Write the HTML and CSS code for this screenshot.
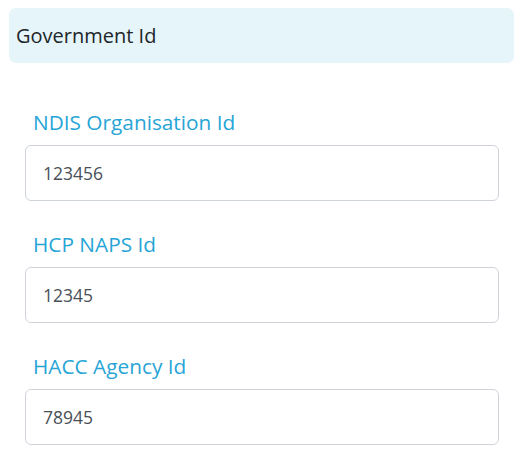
FILE: index.html
```html
<!DOCTYPE html>
<html>
<head>
<meta charset="utf-8">
<link rel="stylesheet" href="styles.css">
</head>
<body>
<div class="panel">
  <div class="panel-header">Government Id</div>
  <div class="panel-body">
    <div class="field">
      <label class="field-label">NDIS Organisation Id</label>
      <div class="field-input">123456</div>
    </div>
    <div class="field">
      <label class="field-label">HCP NAPS Id</label>
      <div class="field-input">12345</div>
    </div>
    <div class="field">
      <label class="field-label">HACC Agency Id</label>
      <div class="field-input">78945</div>
    </div>
  </div>
</div>
</body>
</html>
```
FILE: styles.css
```css
html, body {
  margin: 0;
  padding: 0;
  background: #ffffff;
}
body {
  font-family: "Open Sans", "Noto Sans", sans-serif;
}
.panel {
  padding: 8px 11px 0 9px;
}
.panel-header {
  background: #e5f5fa;
  border-radius: 7px;
  height: 55px;
  box-sizing: border-box;
  padding: 0 7px;
  display: flex;
  align-items: center;
  font-size: 20px;
  color: #212529;
}
.panel-body {
  padding: 45px 15px 0 16px;
  display: flex;
  flex-direction: column;
  gap: 29px;
}
.field {
  display: flex;
  flex-direction: column;
  gap: 9px;
}
.field-label {
  font-size: 20.8px;
  color: #27a5d6;
  padding-left: 8px;
  line-height: 28px;
}
.field-input {
  height: 56px;
  box-sizing: border-box;
  border: 1px solid #ced4da;
  border-radius: 6px;
  display: flex;
  align-items: center;
  padding: 0 17px;
  font-size: 17.5px;
  color: #495057;
}
```
